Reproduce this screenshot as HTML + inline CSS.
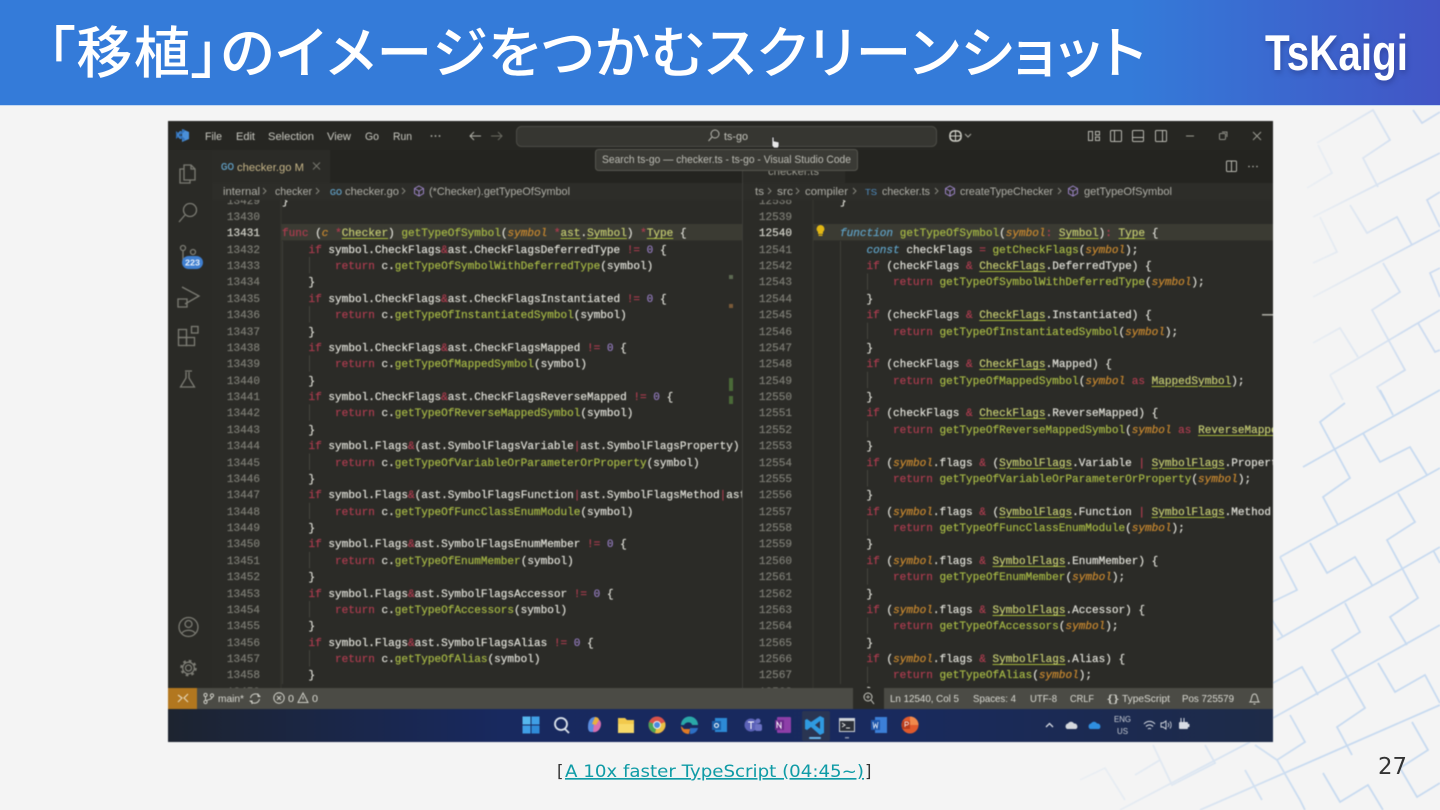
<!DOCTYPE html>
<html lang="ja"><head><meta charset="utf-8"><title>「移植」のイメージをつかむスクリーンショット</title>
<style>
html,body{margin:0;padding:0;width:1440px;height:810px;overflow:hidden;background:#f4f4f4}
#hd{position:absolute;left:0;top:0;width:1440px;height:105px;background:linear-gradient(90deg,#347bd9 0,#347bd9 1130px,#4255c5 1440px);border-bottom:1px solid #c3d8f2}
#tt{position:absolute;left:47px;top:12px;font:500 56px/84px "Liberation Sans","Noto Sans CJK JP",sans-serif;color:#fff;white-space:nowrap;font-feature-settings:"palt";letter-spacing:1.35px}
svg{position:absolute;left:0;top:0}
#shot{position:absolute;left:168px;top:121px;width:1105px;height:621px;overflow:hidden;filter:blur(.5px)}
.clip{position:absolute;top:79px;height:488px;overflow:hidden}
pre{margin:-6.4px 0 0;font:11.05px/16.38px "Liberation Mono",monospace;color:#dcdcd4;-webkit-text-stroke:.25px currentColor}
.n{color:#7b7b73;text-align:right}
.n em{font-style:normal;color:#cfcfc6}
pre b{font-weight:normal;color:#a93c4e}
pre s{text-decoration:none;color:#a3b544}
pre i{color:#c4862f}
pre u{color:#bfc66f;text-decoration:underline;text-decoration-color:#a6b83a;text-underline-offset:2px}
pre var{color:#5e9fc2}
pre tt{font:inherit;color:#8f78b8}
pre .o{color:#c08a3a}
</style></head><body>
<svg width="1440" height="810" viewBox="0 0 1440 810" fill="none">
<defs>
<linearGradient id="g1" gradientUnits="userSpaceOnUse" x1="1285" y1="0" x2="1410" y2="0"><stop offset="0" stop-color="#dbe5f0" stop-opacity=".2"/><stop offset="1" stop-color="#cddcf0"/></linearGradient>
<linearGradient id="g2" gradientUnits="userSpaceOnUse" x1="1020" y1="0" x2="1310" y2="0"><stop offset="0" stop-color="#dbe5f0" stop-opacity=".15"/><stop offset="1" stop-color="#c7daf0"/></linearGradient>
<filter id="bl"><feGaussianBlur stdDeviation=".6"/></filter>
</defs>
<g stroke="url(#g1)" stroke-width="1.8" filter="url(#bl)">
<path d="M1317 143L1373 110L1390 140L1363 158L1378 187M1318 145L1332 173L1307 188M1313 217L1440 153M1350 205L1367 233L1397 217L1412 245M1320 217L1337 252L1313 263M1313 297L1440 230M1383 263L1400 292L1372 310L1405 370L1377 387L1385 400M1330 375L1440 310M1313 343L1340 328L1358 357M1413 110L1422 123L1440 112M1440 192L1427 200L1440 227M1440 268L1430 273L1440 297M1418 323L1435 352L1440 350M1330 375L1343 400"/>
</g>
<g stroke="url(#g2)" stroke-width="1.8" filter="url(#bl)">
<path d="M1303 467L1440 390M1345 403L1320 422L1350 478L1323 497L1338 525M1380 390L1393 415M1280 557L1440 468M1363 433L1380 462L1410 447L1427 475M1398 493L1415 522L1387 540L1418 598L1390 617L1407 645M1277 640L1400 570L1440 547M1310 543L1327 573L1355 557L1372 585M1433 550L1440 563M1345 603L1360 632L1332 650L1365 708L1337 727L1352 755M1273 718L1440 625M1378 663L1395 692L1425 675L1440 703M1273 683L1302 667L1318 695M1290 715L1305 742L1277 760L1300 800L1305 810M1200 810L1440 705M1323 773L1340 802L1368 785L1383 810M1412 722L1428 750L1400 768L1417 797L1440 783M1280 557L1297 590L1270 603M1270 617L1283 637M1153 745L1172 785L1215 763L1205 745M1120 810L1250 742M1160 760L1135 775M1255 745L1277 760M1080 780L1105 768L1125 800M1245 770L1262 800"/>
</g>
</svg>
<div id="hd"></div>
<div id="tt">「移植」のイメージをつかむスクリーンショット</div>
<svg width="1440" height="105" viewBox="0 0 1440 105" style="filter:drop-shadow(1px 3px 3px rgba(20,30,90,.35))"><text x="1265" y="70" font-family="Liberation Sans" font-weight="700" font-size="50" fill="#fff" textLength="143" lengthAdjust="spacingAndGlyphs">TsKaigi</text></svg>

<div id="shot">
<svg width="1105" height="621" viewBox="168 121 1105 621" fill="none" font-family="Liberation Sans" font-size="11">
<rect x="168" y="121" width="1105" height="621" fill="#2b2b27"/>
<rect x="168" y="121" width="1105" height="29" fill="#262622"/>
<rect x="212" y="150" width="1061" height="33" fill="#242420"/>
<rect x="212" y="150" width="118" height="33" fill="#2b2b27"/>
<rect x="742" y="150" width="103" height="33" fill="#2b2b27"/>
<text x="768" y="175" fill="#9a9a90" textLength="51" lengthAdjust="spacingAndGlyphs">checker.ts</text>
<rect x="168" y="150" width="44" height="538" fill="#2a2a26"/>
<rect x="212" y="183" width="1061" height="17" fill="#2d2d29"/>
<rect x="281" y="224" width="461" height="16.4" fill="#3b3b33"/>
<rect x="813" y="224" width="460" height="16.4" fill="#3b3b33"/>
<path d="M742.5 150V688" stroke="#3d3d38"/>
<path d="M281 200V688M813 200V688" stroke="#37372f"/>
<path d="M282.5 241V684M840.5 241V684" stroke="#3e3e38"/>
<path d="M309.5 257V684" stroke="#44443d" stroke-dasharray="16.38 32.76"/>
<path d="M867.5 273.500V684" stroke="#44443d" stroke-dasharray="16.38 32.76"/>
<!-- scroll marks -->
<rect x="729" y="275" width="4" height="4" fill="#5d6a52"/><rect x="729" y="304" width="4" height="4" fill="#7a5a38"/>
<rect x="729" y="378" width="4" height="13" fill="#4a6a38"/><rect x="729" y="396" width="4" height="8" fill="#4a6a38"/>
<rect x="1262" y="314" width="11" height="1.6" fill="#a8a8a0"/>
<!-- title bar -->
<path d="M176 135l4-4 1 0 0 1-2 3 2 3 0 1-1 0z M182 129l7 3v7l-7 3z" fill="#4a8fd8"/><path d="M176 131l9 8-1 2-8-7zM176 139l9-8-1-2-8 7z" fill="#3170b8"/>
<g fill="#c9c9c1">
<text x="205" y="140" textLength="17" lengthAdjust="spacingAndGlyphs">File</text>
<text x="236" y="140" textLength="19" lengthAdjust="spacingAndGlyphs">Edit</text>
<text x="268" y="140" textLength="46" lengthAdjust="spacingAndGlyphs">Selection</text>
<text x="327" y="140" textLength="24" lengthAdjust="spacingAndGlyphs">View</text>
<text x="365" y="140" textLength="14" lengthAdjust="spacingAndGlyphs">Go</text>
<text x="393" y="140" textLength="19" lengthAdjust="spacingAndGlyphs">Run</text>
</g>
<g fill="#b5b5ad"><circle cx="431.5" cy="136" r=".9"/><circle cx="435.5" cy="136" r=".9"/><circle cx="439.5" cy="136" r=".9"/></g>
<path d="M481 136h-11m4-4l-4 4 4 4" stroke="#b0b0a8"/><path d="M491 136h11m-4-4l4 4-4 4" stroke="#6a6a62"/>
<rect x="516.5" y="126.5" width="420" height="20" rx="5" fill="#363631" stroke="#4c4c46"/>
<circle cx="715" cy="134" r="4" stroke="#b5b5ad"/><path d="M712 137l-3.500 4" stroke="#b5b5ad"/>
<text x="724" y="140" fill="#c4c4bc" textLength="24" lengthAdjust="spacingAndGlyphs">ts-go</text>
<rect x="950" y="131" width="11" height="10" rx="4" stroke="#d0d0c8" stroke-width="1.600"/><path d="M955.500 130v11M950 136h11" stroke="#d0d0c8"/>
<path d="M965 134l3 3 3-3" stroke="#a8a8a0"/>
<g stroke="#b8b8b0"><rect x="1088.500" y="131.500" width="4" height="9"/><rect x="1095.500" y="131.500" width="4" height="3.500"/><rect x="1095.500" y="137" width="4" height="3.500"/>
<rect x="1110.500" y="130.500" width="11" height="11" rx="1"/><path d="M1114.500 131v10"/>
<rect x="1132.500" y="130.500" width="11" height="11" rx="1"/><path d="M1133 137.500h10"/>
<rect x="1155.500" y="130.500" width="11" height="11" rx="1"/><path d="M1162.500 131v10"/></g>
<path d="M1186 136h8" stroke="#9a9a92"/><rect x="1219.500" y="133.500" width="6" height="6" rx="1" stroke="#8f8f87"/><path d="M1222 132h5v5" stroke="#8f8f87"/><path d="M1253 132l8 8m0-8l-8 8" stroke="#9a9a92"/>
<rect x="1226.500" y="161" width="10" height="10.500" rx="1" stroke="#b5b5ad"/><path d="M1231.500 161v10.500" stroke="#b5b5ad"/>
<g fill="#b5b5ad"><circle cx="1249" cy="166.500" r=".8"/><circle cx="1253" cy="166.500" r=".8"/><circle cx="1257" cy="166.500" r=".8"/></g>
<!-- tab -->
<text x="221" y="170" font-size="10" font-weight="700" fill="#5f9cc0" textLength="13" lengthAdjust="spacingAndGlyphs">GO</text>
<text x="237" y="171" fill="#c6b587" textLength="67" lengthAdjust="spacingAndGlyphs">checker.go M</text>
<path d="M313 162.500l7 7m0-7l-7 7" stroke="#77776f"/>
<!-- tooltip -->
<rect x="595.500" y="149.500" width="262" height="21" rx="3" fill="#3a3a35" stroke="#55554e"/>
<text x="602" y="163" fill="#bdbdb5" textLength="249" lengthAdjust="spacingAndGlyphs">Search ts-go — checker.ts - ts-go - Visual Studio Code</text>
<path d="M772 137v9l2 2h4l1-2v-4l-5-1v-4z" fill="#e8e8e8" stroke="#222" stroke-width=".7"/>
<!-- breadcrumbs -->
<g fill="#aeaea6">
<text x="223" y="195" textLength="37" lengthAdjust="spacingAndGlyphs">internal</text>
<text x="275" y="195" textLength="37" lengthAdjust="spacingAndGlyphs">checker</text>
<text x="345" y="195" textLength="54" lengthAdjust="spacingAndGlyphs">checker.go</text>
<text x="429" y="195" textLength="141" lengthAdjust="spacingAndGlyphs">(*Checker).getTypeOfSymbol</text>
<text x="755" y="195" textLength="9" lengthAdjust="spacingAndGlyphs">ts</text>
<text x="777" y="195" textLength="16" lengthAdjust="spacingAndGlyphs">src</text>
<text x="805" y="195" textLength="43" lengthAdjust="spacingAndGlyphs">compiler</text>
<text x="882" y="195" textLength="48" lengthAdjust="spacingAndGlyphs">checker.ts</text>
<text x="960" y="195" textLength="93" lengthAdjust="spacingAndGlyphs">createTypeChecker</text>
<text x="1084" y="195" textLength="88" lengthAdjust="spacingAndGlyphs">getTypeOfSymbol</text>
</g>
<path d="M263 188l3 3-3 3M316 188l3 3-3 3M402 188l3 3-3 3M768 188l3 3-3 3M796 188l3 3-3 3M853 188l3 3-3 3M935 188l3 3-3 3M1058 188l3 3-3 3" stroke="#85857d"/>
<text x="330" y="195" font-size="8" font-weight="700" fill="#5f9cc0" textLength="12" lengthAdjust="spacingAndGlyphs">GO</text>
<text x="865" y="195" font-size="8.500" fill="#4f8fc4" textLength="12" lengthAdjust="spacingAndGlyphs">TS</text>
<g stroke="#9a83c4"><path d="M419 186l4.500 2.500v5L419 196l-4.500-2.500v-5zM414.500 188.500l4.500 2.500 4.500-2.500M419 191v5"/><path d="M950 186l4.500 2.500v5L950 196l-4.500-2.500v-5zM945.500 188.500l4.500 2.500 4.500-2.500M950 191v5"/><path d="M1073 186l4.500 2.500v5L1073 196l-4.500-2.500v-5zM1068.500 188.500l4.500 2.500 4.500-2.500M1073 191v5"/></g>
<!-- bulb -->
<path d="M820.500 225a4 4 0 0 1 2.500 7v2h-5v-2a4 4 0 0 1 2.500-7z" fill="#e2b714"/><rect x="818.500" y="234.500" width="4" height="1.500" fill="#c9a51a"/>
<!-- activity -->
<g stroke="#7c7c74" stroke-width="1.300">
<path d="M184 165h7l4 4v11h-11zM191 165v4h4M184 169h-4v14h10v-3"/>
<circle cx="190" cy="210" r="6.500"/><path d="M185 215l-6 7"/>
<circle cx="183" cy="248" r="2.500"/><circle cx="193" cy="252" r="2.500"/><path d="M183 251v12"/>
<path d="M182 287l17 9-14 8M178 299h9v8h-9z"/>
<rect x="178.500" y="337.500" width="8" height="8"/><rect x="186.500" y="337.500" width="8" height="8"/><rect x="178.500" y="329.500" width="8" height="8" /><rect x="191.500" y="326.500" width="6.500" height="6.500"/>
<path d="M185 371h7M186 372v6l-5.500 9h14l-5.500-9v-6"/>
<circle cx="188.500" cy="627" r="9.500"/><circle cx="188.500" cy="624" r="3.500"/><path d="M181.500 634c2-5 12-5 14 0"/>
<circle cx="188.500" cy="668" r="3"/><circle cx="188.500" cy="668" r="7" stroke-width="2.600" stroke-dasharray="2.600 2.900"/><circle cx="188.500" cy="668" r="5.800"/>
</g>
<rect x="182" y="256" width="21" height="13" rx="6.500" fill="#3f7fd0"/>
<text x="185" y="265.500" font-size="8" font-weight="700" fill="#e6effa" textLength="15" lengthAdjust="spacingAndGlyphs">223</text>
<!-- status -->
<rect x="168" y="688" width="1105" height="21" fill="#4b4b45"/>
<rect x="168" y="688" width="29" height="21" fill="#b2771f"/>
<path d="M178 702l4-4-4-3M188 694l-4 4 4 4" stroke="#e4d4b4" stroke-width="1.200"/>
<rect x="853" y="688" width="31" height="21" fill="#2b2b27"/>
<circle cx="868" cy="697" r="4" stroke="#c8c8c0"/><path d="M871 700l3 4" stroke="#c8c8c0"/><path d="M868 695v4M866 697h4" stroke="#c8c8c0" stroke-width=".7"/>
<g stroke="#d0d0c8"><circle cx="205.500" cy="695" r="1.600"/><circle cx="205.500" cy="702" r="1.600"/><circle cx="212" cy="695.500" r="1.600"/><path d="M205.500 697v3M212 697c0 3-4 2-6 4"/>
<path d="M250.500 698a5 5 0 0 1 9-2M259.500 699a5 5 0 0 1-9 2M258 693.500v3h2.500M252 704v-3h-2.500"/>
<circle cx="279" cy="698" r="5.200"/><path d="M277 696l4 4m0-4l-4 4"/><path d="M303 693l5 9.500h-10zM303 696.500v3"/></g>
<g fill="#dadad2" font-size="10.500">
<text x="218" y="702" textLength="26" lengthAdjust="spacingAndGlyphs">main*</text>
<text x="288" y="702" textLength="6" lengthAdjust="spacingAndGlyphs">0</text>
<text x="312" y="702" textLength="6" lengthAdjust="spacingAndGlyphs">0</text>
<text x="890" y="702" textLength="69" lengthAdjust="spacingAndGlyphs">Ln 12540, Col 5</text>
<text x="973" y="702" textLength="43" lengthAdjust="spacingAndGlyphs">Spaces: 4</text>
<text x="1030" y="702" textLength="27" lengthAdjust="spacingAndGlyphs">UTF-8</text>
<text x="1070" y="702" textLength="24" lengthAdjust="spacingAndGlyphs">CRLF</text>
<text x="1107" y="702" textLength="12" lengthAdjust="spacingAndGlyphs">{}</text>
<text x="1122" y="702" textLength="48" lengthAdjust="spacingAndGlyphs">TypeScript</text>
<text x="1182" y="702" textLength="52" lengthAdjust="spacingAndGlyphs">Pos 725579</text>
</g>
<path d="M1250 702c2-2 1-8 4.500-8s2.500 6 4.500 8zM1253.500 704h2" stroke="#d0d0c8"/>
<!-- taskbar -->
<defs><linearGradient id="tb" x1="0" x2="1" y1="0" y2="0"><stop offset="0" stop-color="#1d2430"/><stop offset=".3" stop-color="#18295f"/><stop offset=".65" stop-color="#192a5e"/><stop offset="1" stop-color="#1e2b48"/></linearGradient></defs>
<rect x="168" y="709" width="1105" height="33" fill="url(#tb)"/>
<g fill="#56b8ee"><rect x="522.500" y="716.500" width="8" height="8"/><rect x="531.500" y="716.500" width="8" height="8" fill="#3f9fe6"/><rect x="522.500" y="725.500" width="8" height="8" fill="#3f9fe6"/><rect x="531.500" y="725.500" width="8" height="8" fill="#2f8bd8"/></g>
<circle cx="561" cy="724" r="6" stroke="#dfe6ee" stroke-width="1.800"/><path d="M565 729l4 4" stroke="#dfe6ee" stroke-width="1.800"/>
<path d="M588 727c0-8 4-10 7-10l3 2-4 13h-3c-2 0-3-2-3-5z" fill="#5b8de0"/><path d="M593 732c4 1 8-3 8-8 0-3-2-5-4-5l-3 4z" fill="#d96fb0"/><path d="M595 717c2 0 4 1 4 3l-3 5-4-1z" fill="#e8b040"/>
<path d="M618 718h7l2 2h7v13h-16z" fill="#f2c94c"/><rect x="618" y="724" width="16" height="9" fill="#f7d968"/>
<circle cx="657" cy="725" r="8.500" fill="#d9534a"/><path d="M657 725l8-3a8.500 8.500 0 0 1-10 11z" fill="#e8c144"/><path d="M657 725l-2 8a8.500 8.500 0 0 1-6-11z" fill="#4aa455"/><circle cx="657" cy="725" r="3.500" fill="#4a8ae0" stroke="#eee"/>
<path d="M681 725a8.500 8.500 0 0 1 17 0h-6c0-3-6-4-8 0z" fill="#2aa8a8"/><path d="M681 726c0 6 4 8 8 8l1-5h-6z" fill="#e07a24"/><path d="M690 728h8c-1 4-4 6-8 6z" fill="#2d6fc4"/>
<rect x="715" y="718" width="12" height="14" fill="#2d8ad6"/><rect x="712" y="721" width="9" height="9" fill="#1a5fa8"/><circle cx="716.500" cy="725.500" r="2" stroke="#fff"/>
<circle cx="751" cy="725" r="6.500" fill="#5b62b8"/><circle cx="758" cy="721" r="2.500" fill="#6c72c4"/><rect x="755" y="724" width="7" height="7" rx="2" fill="#6c72c4"/><path d="M748 722h6M751 722v7" stroke="#fff"/>
<rect x="777" y="717" width="14" height="16" rx="1" fill="#8e3fa8"/><rect x="775" y="720" width="9" height="10" fill="#6d2a8c"/><path d="M777 728v-6l4 6v-6" stroke="#fff" stroke-width=".9"/>
<rect x="802" y="711" width="28" height="30" rx="2" fill="#2a3552"/>
<path d="M820 716l4 2v15l-4 2-9-8-4 3-2-1v-9l2-1 4 3zM820 721l-5 4 5 4z" fill="#2f9ae0"/><rect x="809" y="737" width="12" height="2" rx="1" fill="#6ab6ea"/>
<rect x="839" y="718" width="16" height="14" fill="#cfd3d8"/><rect x="840" y="721" width="14" height="10" fill="#2b2f38"/><path d="M842 723l3 2-3 2M846 728h4" stroke="#e4e4e4"/><rect x="845" y="737" width="4" height="1.500" fill="#8a93a8"/>
<rect x="875" y="717" width="12" height="16" fill="#3c7fd8"/><rect x="871" y="720" width="9" height="10" fill="#1d56ab"/><path d="M873 722l1 6 1.500-4 1.500 4 1-6" stroke="#fff" stroke-width=".7"/>
<circle cx="910" cy="725" r="8.500" fill="#e05a2c"/><path d="M910 725v-8.500a8.500 8.500 0 0 1 8.500 8.500z" fill="#f08a4c"/><rect x="902" y="721" width="8" height="8" fill="#b83c1c"/><path d="M905 727v-5h2a1.300 1.300 0 0 1 0 3h-2" stroke="#fff" stroke-width=".7"/>
<path d="M1046 727l3.500-3.500 3.500 3.500" stroke="#d8dce4" stroke-width="1.300"/>
<path d="M1067 729a3 3 0 0 1 1-5.500 3.500 3.500 0 0 1 6 0 3 3 0 0 1 2 5.500z" fill="#d6d9de"/>
<path d="M1090 729a3 3 0 0 1 1-5.500 3.500 3.500 0 0 1 6 0 3 3 0 0 1 2 5.500z" fill="#2f8fe0"/>
<g fill="#c8ccd4" font-size="8.500"><text x="1114" y="722" textLength="17" lengthAdjust="spacingAndGlyphs">ENG</text><text x="1117" y="734" textLength="11" lengthAdjust="spacingAndGlyphs">US</text></g>
<path d="M1144 724a7 7 0 0 1 11 0M1146 726.500a4.500 4.500 0 0 1 7 0M1148 729a2 2 0 0 1 3 0" stroke="#d8dce4"/>
<path d="M1161 723h2l3-2v8l-3-2h-2zM1168 723a3 3 0 0 1 0 4M1170 721.500a6 6 0 0 1 0 7" stroke="#d8dce4" stroke-width=".9"/>
<rect x="1179" y="722" width="9" height="7" rx="1" fill="#d8dce4"/><rect x="1188" y="724" width="1.500" height="3" fill="#d8dce4"/><path d="M1181 718v4M1184 718v4" stroke="#d8dce4"/>
</svg>
<div class="clip" style="left:54px;width:38px"><pre class="n">13429
13430
<em>13431</em>
13432
13433
13434
13435
13436
13437
13438
13439
13440
13441
13442
13443
13444
13445
13446
13447
13448
13449
13450
13451
13452
13453
13454
13455
13456
13457
13458
13459</pre></div>
<div class="clip" style="left:114px;width:460px"><pre>}

<b>func</b> (<i>c</i> <b>*</b><u>Checker</u>) <s>getTypeOfSymbol</s>(<i>symbol</i> <b>*</b><u>ast</u>.<u>Symbol</u>) <b>*</b><u>Type</u> {
    <b>if</b> symbol.CheckFlags<b>&amp;</b>ast.CheckFlagsDeferredType <b>!=</b> <tt>0</tt> {
        <b>return</b> c.<s>getTypeOfSymbolWithDeferredType</s>(symbol)
    }
    <b>if</b> symbol.CheckFlags<b>&amp;</b>ast.CheckFlagsInstantiated <b>!=</b> <tt>0</tt> {
        <b>return</b> c.<s>getTypeOfInstantiatedSymbol</s>(symbol)
    }
    <b>if</b> symbol.CheckFlags<b>&amp;</b>ast.CheckFlagsMapped <b>!=</b> <tt>0</tt> {
        <b>return</b> c.<s>getTypeOfMappedSymbol</s>(symbol)
    }
    <b>if</b> symbol.CheckFlags<b>&amp;</b>ast.CheckFlagsReverseMapped <b>!=</b> <tt>0</tt> {
        <b>return</b> c.<s>getTypeOfReverseMappedSymbol</s>(symbol)
    }
    <b>if</b> symbol.Flags<b>&amp;</b>(ast.SymbolFlagsVariable<b>|</b>ast.SymbolFlagsProperty)<b>!=</b> <tt>0</tt> {
        <b>return</b> c.<s>getTypeOfVariableOrParameterOrProperty</s>(symbol)
    }
    <b>if</b> symbol.Flags<b>&amp;</b>(ast.SymbolFlagsFunction<b>|</b>ast.SymbolFlagsMethod<b>|</b>ast.SymbolFlagsClass
        <b>return</b> c.<s>getTypeOfFuncClassEnumModule</s>(symbol)
    }
    <b>if</b> symbol.Flags<b>&amp;</b>ast.SymbolFlagsEnumMember <b>!=</b> <tt>0</tt> {
        <b>return</b> c.<s>getTypeOfEnumMember</s>(symbol)
    }
    <b>if</b> symbol.Flags<b>&amp;</b>ast.SymbolFlagsAccessor <b>!=</b> <tt>0</tt> {
        <b>return</b> c.<s>getTypeOfAccessors</s>(symbol)
    }
    <b>if</b> symbol.Flags<b>&amp;</b>ast.SymbolFlagsAlias <b>!=</b> <tt>0</tt> {
        <b>return</b> c.<s>getTypeOfAlias</s>(symbol)
    }
    </pre></div>
<div class="clip" style="left:586px;width:38px"><pre class="n">12538
12539
<em>12540</em>
12541
12542
12543
12544
12545
12546
12547
12548
12549
12550
12551
12552
12553
12554
12555
12556
12557
12558
12559
12560
12561
12562
12563
12564
12565
12566
12567
12568</pre></div>
<div class="clip" style="left:672px;width:433px"><pre>}

<var><i style="color:#5e9fc2">function</i></var> <s>getTypeOfSymbol</s>(<i>symbol</i><b>:</b> <u>Symbol</u>)<b>:</b> <u>Type</u> {
    <var><i style="color:#5e9fc2">const</i></var> checkFlags <b>=</b> <s>getCheckFlags</s>(<i>symbol</i>);
    <b>if</b> (checkFlags <b>&amp;</b> <u>CheckFlags</u>.DeferredType) {
        <b>return</b> <s>getTypeOfSymbolWithDeferredType</s>(<i>symbol</i>);
    }
    <b>if</b> (checkFlags <b>&amp;</b> <u>CheckFlags</u>.Instantiated) {
        <b>return</b> <s>getTypeOfInstantiatedSymbol</s>(<i>symbol</i>);
    }
    <b>if</b> (checkFlags <b>&amp;</b> <u>CheckFlags</u>.Mapped) {
        <b>return</b> <s>getTypeOfMappedSymbol</s>(<i>symbol</i> <b>as</b> <u>MappedSymbol</u>);
    }
    <b>if</b> (checkFlags <b>&amp;</b> <u>CheckFlags</u>.ReverseMapped) {
        <b>return</b> <s>getTypeOfReverseMappedSymbol</s>(<i>symbol</i> <b>as</b> <u>ReverseMappedSymbol</u>);
    }
    <b>if</b> (<i>symbol</i>.flags <b>&amp;</b> (<u>SymbolFlags</u>.Variable <b>|</b> <u>SymbolFlags</u>.Property)) {
        <b>return</b> <s>getTypeOfVariableOrParameterOrProperty</s>(<i>symbol</i>);
    }
    <b>if</b> (<i>symbol</i>.flags <b>&amp;</b> (<u>SymbolFlags</u>.Function <b>|</b> <u>SymbolFlags</u>.Method <b>|</b> SymbolFlags
        <b>return</b> <s>getTypeOfFuncClassEnumModule</s>(<i>symbol</i>);
    }
    <b>if</b> (<i>symbol</i>.flags <b>&amp;</b> <u>SymbolFlags</u>.EnumMember) {
        <b>return</b> <s>getTypeOfEnumMember</s>(<i>symbol</i>);
    }
    <b>if</b> (<i>symbol</i>.flags <b>&amp;</b> <u>SymbolFlags</u>.Accessor) {
        <b>return</b> <s>getTypeOfAccessors</s>(<i>symbol</i>);
    }
    <b>if</b> (<i>symbol</i>.flags <b>&amp;</b> <u>SymbolFlags</u>.Alias) {
        <b>return</b> <s>getTypeOfAlias</s>(<i>symbol</i>);
    }</pre></div>
</div>

<svg width="1440" height="810" viewBox="0 0 1440 810" font-family="DejaVu Sans" style="pointer-events:none">
<text x="557" y="777" font-size="16.500" fill="#333" textLength="8" lengthAdjust="spacing">[</text>
<text x="565" y="777" font-size="16.500" fill="#0f9ba6" text-decoration="underline" textLength="299" lengthAdjust="spacingAndGlyphs">A 10x faster TypeScript (04:45~)</text>
<text x="865" y="777" font-size="16.500" fill="#333" textLength="8" lengthAdjust="spacing">]</text>
<text x="1378" y="774" font-size="23" fill="#333" textLength="29" lengthAdjust="spacingAndGlyphs">27</text>
</svg>
</body></html>
